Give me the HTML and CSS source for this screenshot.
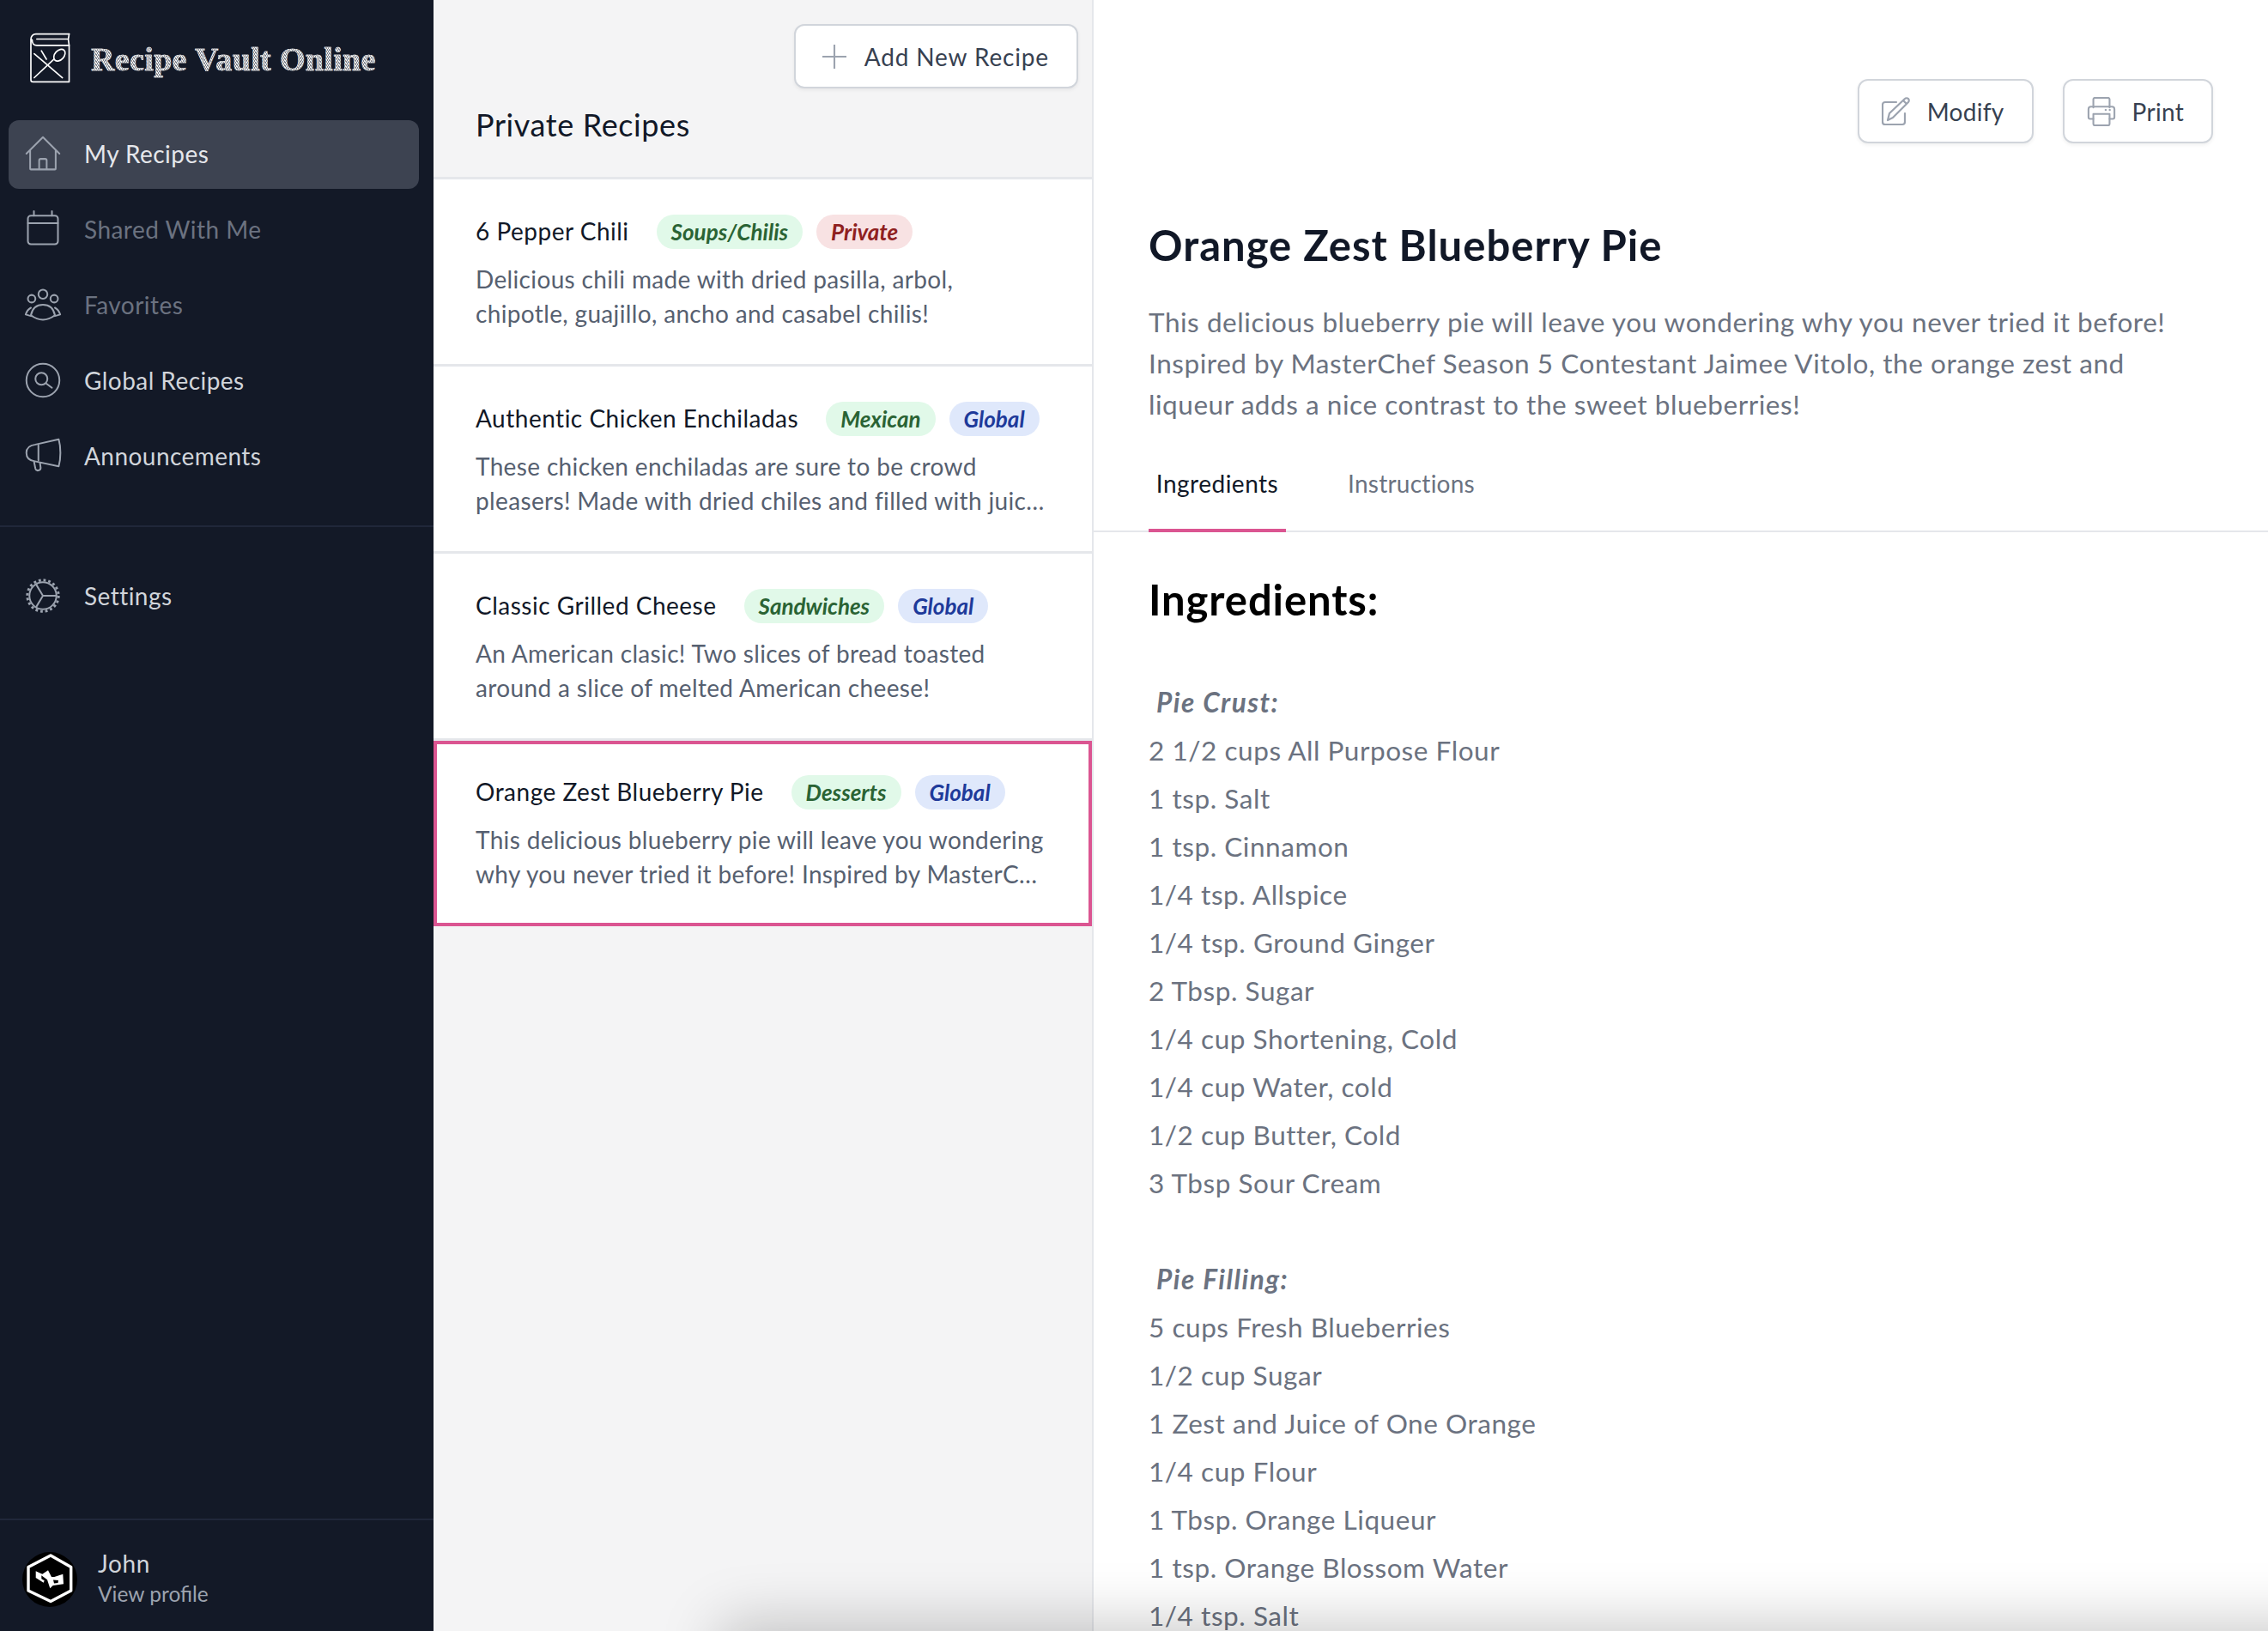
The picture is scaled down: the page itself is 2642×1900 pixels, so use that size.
FILE: index.html
```html
<!DOCTYPE html>
<html lang="en">
<head>
  <meta charset="UTF-8">
  <title>Recipe Vault Online</title>
  <link rel="stylesheet" href="styles.css">
</head>
<body>
  <div class="app">
    <aside class="sidebar">
      <div class="brand">
        <svg class="brand-logo" viewBox="0 0 48 60" fill="none" stroke="#fff" stroke-width="1.700" stroke-linecap="round" stroke-linejoin="round">
          <path d="M46.500 1.500H7C3.500 1.500 1 4 1 8v48c0 1.500 1 2.500 2.500 2.500h43V15H8c-4 0-5.500-3-5.500-6.500"/>
          <path d="M46.500 1.500L45.500 8l1 7M8 7.500h37"/>
          <path d="M5 53.500l23.500-22"/>
          <path d="M38.500 53.500L15 33.500M5 25l10 8.500M13.500 21.500l6 10"/>
          <ellipse cx="35" cy="26.700" rx="5.500" ry="8" transform="rotate(42 35 26.700)"/>
        </svg>
        <span class="brand-name">Recipe Vault Online</span>
      </div>

      <nav class="nav">
        <a class="nav-item active">
          <svg class="nav-icon" viewBox="0 0 24 24"><path d="M1 12L12 1l11 11M3.500 9.500V22a.5.5 0 00.5.5h16a.5.5 0 00.5-.5V9.500M9.500 22.500v-6a1 1 0 011-1h3a1 1 0 011 1v6"/></svg>
          My Recipes
        </a>
        <a class="nav-item">
          <svg class="nav-icon" viewBox="0 0 24 24"><rect x="2" y="3" width="20" height="19" rx="2"/><path d="M2 8h20M6 3V0M18 3V0"/></svg>
          Shared With Me
        </a>
        <a class="nav-item">
          <svg class="nav-icon" viewBox="0 0 24 24"><circle cx="12" cy="5" r="3"/><circle cx="4.500" cy="8" r="2.500"/><circle cx="19.500" cy="8" r="2.500"/><path d="M12 12c-4 0-7 2-8 7 2 1.500 5 3 8 3s6-1.500 8-3c-1-5-4-7-8-7zM4 14c-2 1-3 3-3.500 4.500L4 19.500M20 14c2 1 3 3 3.500 4.500L20 19.500"/></svg>
          Favorites
        </a>
        <a class="nav-item">
          <svg class="nav-icon" viewBox="0 0 24 24"><circle cx="12" cy="12" r="11"/><circle cx="11" cy="11" r="4"/><path d="M14 14l4 3"/></svg>
          Global Recipes
        </a>
        <a class="nav-item">
          <svg class="nav-icon" viewBox="0 0 24 24"><path d="M22.500 1L7 4.500C3 5 1 7 1 10s2 5 5 5.500L22.500 19c1.500-5 1.500-13 0-18zM9 5v10M6 15.500l1 5c.5 2 3.500 1.500 3.500-.5L10 16.500"/></svg>
          Announcements
        </a>
      </nav>

      <div class="nav-divider"></div>

      <nav class="nav">
        <a class="nav-item">
          <svg class="nav-icon" viewBox="0 0 24 24"><circle cx="12" cy="12" r="9"/><circle class="gear-teeth" cx="12" cy="12" r="10.400"/><path d="M12 12L7.500 4.500M12 12h9M12 12l-4.500 7.500"/></svg>
          Settings
        </a>
      </nav>

      <div class="profile">
        <svg class="avatar" viewBox="0 0 64 64">
          <circle cx="32" cy="32" r="32" fill="#000"/>
          <path d="M33 4l23.700 13.500V45L33 57.500 7 45V17.500z" fill="none" stroke="#fff" stroke-width="3.400" stroke-linejoin="round"/>
          <path d="M15.700 22.300l7.600 3.400 6.700-4.400 4 7.700h3.300l10-3.300.7 11.600-12.300 1.700-3.400 3.300L29 32.300l-6.700-5v4l3.400 2-1 2.400-9-5.700z" fill="#fff"/>
          <path d="M36 32.500l6 .5-.5 3-4.500.5z" fill="#000"/>
        </svg>
        <div class="profile-text">
          <div class="profile-name">John</div>
          <div class="profile-link">View profile</div>
        </div>
      </div>
    </aside>

    <section class="list-panel">
      <header class="list-header">
        <button class="btn btn-add">
          <svg class="btn-icon plus" viewBox="0 0 24 24"><path d="M12 0v24M0 12h24"/></svg>
          Add New Recipe
        </button>
        <h2 class="list-title">Private Recipes</h2>
      </header>

      <article class="recipe">
        <div class="recipe-top">
          <span class="recipe-name">6 Pepper Chili</span>
          <span class="tag tag-green">Soups/Chilis</span>
          <span class="tag tag-red">Private</span>
        </div>
        <p class="recipe-desc">Delicious chili made with dried pasilla, arbol, chipotle, guajillo, ancho and casabel chilis!</p>
      </article>

      <article class="recipe">
        <div class="recipe-top">
          <span class="recipe-name">Authentic Chicken Enchiladas</span>
          <span class="tag tag-green">Mexican</span>
          <span class="tag tag-blue">Global</span>
        </div>
        <p class="recipe-desc">These chicken enchiladas are sure to be crowd pleasers! Made with dried chiles and filled with juic…</p>
      </article>

      <article class="recipe">
        <div class="recipe-top">
          <span class="recipe-name">Classic Grilled Cheese</span>
          <span class="tag tag-green">Sandwiches</span>
          <span class="tag tag-blue">Global</span>
        </div>
        <p class="recipe-desc">An American clasic! Two slices of bread toasted around a slice of melted American cheese!</p>
      </article>

      <article class="recipe selected">
        <div class="recipe-top">
          <span class="recipe-name">Orange Zest Blueberry Pie</span>
          <span class="tag tag-green">Desserts</span>
          <span class="tag tag-blue">Global</span>
        </div>
        <p class="recipe-desc">This delicious blueberry pie will leave you wondering why you never tried it before! Inspired by MasterC…</p>
      </article>
    </section>

    <main class="detail">
      <div class="detail-actions">
        <button class="btn">
          <svg class="btn-icon" viewBox="0 0 34 34"><path d="M17 6H4a3 3 0 00-3 3v20a3 3 0 003 3h20a3 3 0 003-3V19"/><path d="M7 27l2-8L27 2c1-1 3-1 4 0s1 3 0 4L13 24zM25 4l4 4"/></svg>
          Modify
        </button>
        <button class="btn">
          <svg class="btn-icon" viewBox="0 0 34 36"><path d="M7 13V3a2 2 0 012-2h16a2 2 0 012 2v10M7 27H3a2 2 0 01-2-2V15a3 3 0 013-3h26a3 3 0 013 3v10a2 2 0 01-2 2h-4"/><path d="M7 21h20v12a2 2 0 01-2 2H9a2 2 0 01-2-2z"/><path d="M22 16h.5M27 16h.5"/></svg>
          Print
        </button>
      </div>

      <div class="detail-head">
        <h1 class="detail-title">Orange Zest Blueberry Pie</h1>
        <p class="detail-desc">This delicious blueberry pie will leave you wondering why you never tried it before! Inspired by MasterChef Season 5 Contestant Jaimee Vitolo, the orange zest and liqueur adds a nice contrast to the sweet blueberries!</p>
      </div>

      <div class="tabs">
        <a class="tab active">Ingredients</a>
        <a class="tab">Instructions</a>
      </div>

      <div class="content">
        <h2 class="content-title">Ingredients:</h2>
        <div class="ingredients">
          <strong>Pie Crust:</strong>
          <span>2 1/2 cups All Purpose Flour</span>
          <span>1 tsp. Salt</span>
          <span>1 tsp. Cinnamon</span>
          <span>1/4 tsp. Allspice</span>
          <span>1/4 tsp. Ground Ginger</span>
          <span>2 Tbsp. Sugar</span>
          <span>1/4 cup Shortening, Cold</span>
          <span>1/4 cup Water, cold</span>
          <span>1/2 cup Butter, Cold</span>
          <span>3 Tbsp Sour Cream</span>
          <strong class="group-start">Pie Filling:</strong>
          <span>5 cups Fresh Blueberries</span>
          <span>1/2 cup Sugar</span>
          <span>1 Zest and Juice of One Orange</span>
          <span>1/4 cup Flour</span>
          <span>1 Tbsp. Orange Liqueur</span>
          <span>1 tsp. Orange Blossom Water</span>
          <span>1/4 tsp. Salt</span>
        </div>
      </div>
    </main>
  </div>
  <div class="bottom-shade"></div>
</body>
</html>
```

FILE: styles.css
```css
* {
  box-sizing: border-box;
}
html, body {
  margin: 0;
  height: 1900px;
  overflow: hidden;
}
body {
  font-family: Lato, "Noto Sans", sans-serif;
  font-size: 28px;
  color: #111827;
  background: #fff;
}
.app {
  display: flex;
  height: 1900px;
}

/* sidebar */
.sidebar {
  width: 505px;
  flex: none;
  display: flex;
  flex-direction: column;
  background: #131927;
}
.brand {
  height: 140px;
  padding: 38px 0 0 35px;
  display: flex;
  align-items: flex-start;
  gap: 24px;
}
.brand-logo {
  width: 47px;
  height: 59px;
}
.brand-name {
  font-family: "Liberation Serif", serif;
  font-size: 38px;
  font-weight: bold;
  line-height: 62px;
  letter-spacing: .35px;
  color: transparent;
  background: repeating-linear-gradient(60deg, #f2f2f2 0 1px, #7d818a 1px 2px);
  -webkit-background-clip: text;
  background-clip: text;
  -webkit-text-stroke: .5px #e8e8e8;
}
.nav {
  display: flex;
  flex-direction: column;
  gap: 8px;
  padding: 0 17px 0 10px;
}
.nav-item {
  height: 80px;
  padding: 0 0 2px 19px;
  display: flex;
  align-items: center;
  gap: 27px;
  border-radius: 12px;
  color: #d1d5db;
  letter-spacing: .45px;
}
.nav-item:nth-child(2),
.nav-item:nth-child(3) {
  color: #6b7280;
}
.nav-item.active {
  background: #3d4351;
  color: #e5e7eb;
}
.nav-icon {
  width: 42px;
  height: 42px;
  flex: none;
  fill: none;
  stroke: #9ca3af;
  stroke-width: 1.150;
  stroke-linecap: round;
  stroke-linejoin: round;
  overflow: visible;
}
.gear-teeth {
  stroke-width: 1.700;
  stroke-linecap: butt;
  stroke-dasharray: 1.630 1.637;
}
.nav-divider {
  height: 2px;
  margin: 40px 0 41px;
  background: #20273a;
}
.profile {
  margin-top: auto;
  height: 131px;
  padding: 37px 0 0 26px;
  display: flex;
  gap: 24px;
  border-top: 2px solid #20273a;
}
.avatar {
  width: 64px;
  height: 64px;
}
.profile-text {
  margin-top: -5px;
}
.profile-name {
  color: #d1d5db;
  line-height: 36px;
  letter-spacing: .6px;
}
.profile-link {
  font-size: 24.500px;
  line-height: 36px;
  color: #9ca3af;
}

/* recipe list */
.list-panel {
  width: 769px;
  flex: none;
  background: #f4f4f5;
  border-right: 2px solid #e5e7eb;
}
.list-header {
  height: 209px;
  padding: 28px 16px 0 49px;
  display: flex;
  flex-direction: column;
  border-bottom: 3px solid #e5e7eb;
}
.btn {
  height: 75px;
  padding: 0 32px 0 26px;
  display: inline-flex;
  align-items: center;
  gap: 19px;
  font: inherit;
  letter-spacing: .3px;
  color: #374151;
  background: #fff;
  border: 2.500px solid #d1d5db;
  border-radius: 12px;
  box-shadow: 0 2px 4px rgba(0, 0, 0, .06);
}
.btn-add {
  align-self: flex-end;
  padding: 0 32px 0 31px;
  gap: 21px;
  letter-spacing: .85px;
}
.btn-icon {
  width: 34px;
  height: 34px;
  fill: none;
  stroke: #9ca3af;
  stroke-width: 2.200;
  stroke-linecap: round;
  stroke-linejoin: round;
}
.plus {
  width: 28px;
  height: 28px;
  stroke-width: 1.800;
}
.list-title {
  margin: 20px 0 0;
  font-size: 36px;
  font-weight: 400;
  line-height: 44px;
  letter-spacing: .6px;
}
.recipe {
  height: 218px;
  padding: 41px 52px 0 49px;
  background: #fff;
  border-bottom: 3px solid #e5e7eb;
}
.recipe.selected {
  height: 216px;
  padding: 36px 48px 0 45px;
  border: 4px solid #db5591;
}
.recipe-top {
  display: flex;
  align-items: center;
  height: 40px;
}
.recipe-name {
  flex: none;
  margin-right: 32px;
  padding-bottom: 2px;
  white-space: nowrap;
  letter-spacing: .5px;
}
.tag {
  flex: none;
  height: 40px;
  padding: 0 17px;
  margin-right: 16px;
  display: flex;
  align-items: center;
  border-radius: 20px;
  font-size: 26px;
  font-style: italic;
  font-weight: 700;
}
.tag:last-child {
  margin-right: 0;
}
.tag-green {
  background: #e1f9e9;
  color: #2a6334;
}
.tag-red {
  background: #f8e2e3;
  color: #8f2020;
}
.tag-blue {
  background: #dfe8fb;
  color: #1e3a9a;
}
.recipe-desc {
  margin: 15px 0 0;
  line-height: 40px;
  letter-spacing: .35px;
  color: #566070;
}

/* recipe detail */
.detail {
  flex: 1;
  min-width: 0;
}
.detail-actions {
  height: 167px;
  padding: 92px 64px 0 0;
  display: flex;
  justify-content: flex-end;
  gap: 34px;
}
.detail-head {
  padding: 0 64px;
}
.detail-title {
  margin: 86px 0 0;
  font-size: 49px;
  font-weight: 700;
  line-height: 64px;
  letter-spacing: 1px;
}
.detail-desc {
  margin: 34px 0 0;
  font-size: 31.500px;
  line-height: 48px;
  letter-spacing: .55px;
  color: #6b7280;
}
.tabs {
  height: 101px;
  margin-top: 24px;
  padding-left: 64px;
  display: flex;
  gap: 72px;
  border-bottom: 2px solid #e5e7eb;
}
.tab {
  height: 101px;
  padding-top: 27px;
  color: #6b7280;
  letter-spacing: .25px;
}
.tab.active {
  width: 160px;
  text-align: center;
  letter-spacing: .5px;
  color: #111827;
  border-bottom: 4px solid #db5591;
}
.content {
  padding: 0 64px;
}
.content-title {
  margin: 45px 0 0;
  font-size: 49px;
  font-weight: 700;
  line-height: 66px;
  letter-spacing: .9px;
  color: #000;
}
.ingredients {
  margin-top: 59px;
  display: flex;
  flex-direction: column;
  font-size: 31.500px;
  line-height: 56px;
  letter-spacing: .55px;
  color: #6b7280;
}
.ingredients strong {
  margin-left: 9px;
  font-style: italic;
  letter-spacing: 1.500px;
}
.ingredients .group-start {
  margin-top: 56px;
}

/* soft shadow along the bottom edge of the capture */
.bottom-shade {
  position: fixed;
  left: 840px;
  right: -100px;
  top: 1900px;
  height: 100px;
  box-shadow: 0 -8px 70px rgba(0, 0, 0, .22);
}
```
